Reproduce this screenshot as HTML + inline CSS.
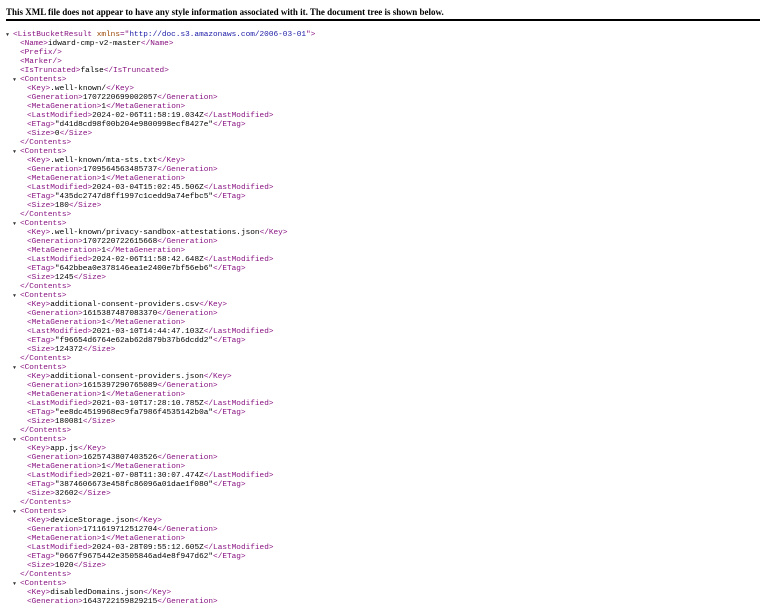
<!DOCTYPE html>
<html><head><meta charset="utf-8"><style>
body{margin:0;background:#fff;width:760px;height:600px;overflow:hidden;position:relative}
.hd{position:absolute;left:6px;top:7px;font:bold 9px "Liberation Serif",serif;color:#000;white-space:nowrap}
.rule{position:absolute;left:6px;right:0;top:19px;height:2px;background:#000}
.x{position:absolute;left:0;top:31px;font:7.75px/9px "Liberation Mono",monospace;color:#000}
.l{height:9px;position:relative;white-space:pre}
.t{color:#881280}.a{color:#994500}.v{color:#1a1aa6}
.ar{position:absolute;font-size:5px;color:#333;top:0}
</style></head><body>
<div class="hd">This XML file does not appear to have any style information associated with it. The document tree is shown below.</div>
<div class="rule"></div>
<div class="x"><div class="l" style="padding-left:13px"><span class="ar" style="left:6px">▼</span><span class="t">&lt;ListBucketResult</span> <span class="a">xmlns</span><span class="t">="</span><span class="v">http://doc.s3.amazonaws.com/2006-03-01</span><span class="t">"&gt;</span></div><div class="l" style="padding-left:20px"><span class="t">&lt;Name&gt;</span>idward-cmp-v2-master<span class="t">&lt;/Name&gt;</span></div><div class="l" style="padding-left:20px"><span class="t">&lt;Prefix/&gt;</span></div><div class="l" style="padding-left:20px"><span class="t">&lt;Marker/&gt;</span></div><div class="l" style="padding-left:20px"><span class="t">&lt;IsTruncated&gt;</span>false<span class="t">&lt;/IsTruncated&gt;</span></div><div class="l" style="padding-left:20px"><span class="ar" style="left:13px">▼</span><span class="t">&lt;Contents&gt;</span></div><div class="l" style="padding-left:27px"><span class="t">&lt;Key&gt;</span>.well-known/<span class="t">&lt;/Key&gt;</span></div><div class="l" style="padding-left:27px"><span class="t">&lt;Generation&gt;</span>1707220699002057<span class="t">&lt;/Generation&gt;</span></div><div class="l" style="padding-left:27px"><span class="t">&lt;MetaGeneration&gt;</span>1<span class="t">&lt;/MetaGeneration&gt;</span></div><div class="l" style="padding-left:27px"><span class="t">&lt;LastModified&gt;</span>2024-02-06T11:58:19.034Z<span class="t">&lt;/LastModified&gt;</span></div><div class="l" style="padding-left:27px"><span class="t">&lt;ETag&gt;</span>"d41d8cd98f00b204e9800998ecf8427e"<span class="t">&lt;/ETag&gt;</span></div><div class="l" style="padding-left:27px"><span class="t">&lt;Size&gt;</span>0<span class="t">&lt;/Size&gt;</span></div><div class="l" style="padding-left:20px"><span class="t">&lt;/Contents&gt;</span></div><div class="l" style="padding-left:20px"><span class="ar" style="left:13px">▼</span><span class="t">&lt;Contents&gt;</span></div><div class="l" style="padding-left:27px"><span class="t">&lt;Key&gt;</span>.well-known/mta-sts.txt<span class="t">&lt;/Key&gt;</span></div><div class="l" style="padding-left:27px"><span class="t">&lt;Generation&gt;</span>1709564563485737<span class="t">&lt;/Generation&gt;</span></div><div class="l" style="padding-left:27px"><span class="t">&lt;MetaGeneration&gt;</span>1<span class="t">&lt;/MetaGeneration&gt;</span></div><div class="l" style="padding-left:27px"><span class="t">&lt;LastModified&gt;</span>2024-03-04T15:02:45.506Z<span class="t">&lt;/LastModified&gt;</span></div><div class="l" style="padding-left:27px"><span class="t">&lt;ETag&gt;</span>"435dc2747d8ff1997c1cedd9a74efbc5"<span class="t">&lt;/ETag&gt;</span></div><div class="l" style="padding-left:27px"><span class="t">&lt;Size&gt;</span>180<span class="t">&lt;/Size&gt;</span></div><div class="l" style="padding-left:20px"><span class="t">&lt;/Contents&gt;</span></div><div class="l" style="padding-left:20px"><span class="ar" style="left:13px">▼</span><span class="t">&lt;Contents&gt;</span></div><div class="l" style="padding-left:27px"><span class="t">&lt;Key&gt;</span>.well-known/privacy-sandbox-attestations.json<span class="t">&lt;/Key&gt;</span></div><div class="l" style="padding-left:27px"><span class="t">&lt;Generation&gt;</span>1707220722615668<span class="t">&lt;/Generation&gt;</span></div><div class="l" style="padding-left:27px"><span class="t">&lt;MetaGeneration&gt;</span>1<span class="t">&lt;/MetaGeneration&gt;</span></div><div class="l" style="padding-left:27px"><span class="t">&lt;LastModified&gt;</span>2024-02-06T11:58:42.648Z<span class="t">&lt;/LastModified&gt;</span></div><div class="l" style="padding-left:27px"><span class="t">&lt;ETag&gt;</span>"642bbea0e378146ea1e2400e7bf56eb6"<span class="t">&lt;/ETag&gt;</span></div><div class="l" style="padding-left:27px"><span class="t">&lt;Size&gt;</span>1245<span class="t">&lt;/Size&gt;</span></div><div class="l" style="padding-left:20px"><span class="t">&lt;/Contents&gt;</span></div><div class="l" style="padding-left:20px"><span class="ar" style="left:13px">▼</span><span class="t">&lt;Contents&gt;</span></div><div class="l" style="padding-left:27px"><span class="t">&lt;Key&gt;</span>additional-consent-providers.csv<span class="t">&lt;/Key&gt;</span></div><div class="l" style="padding-left:27px"><span class="t">&lt;Generation&gt;</span>1615387487083370<span class="t">&lt;/Generation&gt;</span></div><div class="l" style="padding-left:27px"><span class="t">&lt;MetaGeneration&gt;</span>1<span class="t">&lt;/MetaGeneration&gt;</span></div><div class="l" style="padding-left:27px"><span class="t">&lt;LastModified&gt;</span>2021-03-10T14:44:47.103Z<span class="t">&lt;/LastModified&gt;</span></div><div class="l" style="padding-left:27px"><span class="t">&lt;ETag&gt;</span>"f96654d6764e62ab62d879b37b6dcdd2"<span class="t">&lt;/ETag&gt;</span></div><div class="l" style="padding-left:27px"><span class="t">&lt;Size&gt;</span>124372<span class="t">&lt;/Size&gt;</span></div><div class="l" style="padding-left:20px"><span class="t">&lt;/Contents&gt;</span></div><div class="l" style="padding-left:20px"><span class="ar" style="left:13px">▼</span><span class="t">&lt;Contents&gt;</span></div><div class="l" style="padding-left:27px"><span class="t">&lt;Key&gt;</span>additional-consent-providers.json<span class="t">&lt;/Key&gt;</span></div><div class="l" style="padding-left:27px"><span class="t">&lt;Generation&gt;</span>1615397290765089<span class="t">&lt;/Generation&gt;</span></div><div class="l" style="padding-left:27px"><span class="t">&lt;MetaGeneration&gt;</span>1<span class="t">&lt;/MetaGeneration&gt;</span></div><div class="l" style="padding-left:27px"><span class="t">&lt;LastModified&gt;</span>2021-03-10T17:28:10.785Z<span class="t">&lt;/LastModified&gt;</span></div><div class="l" style="padding-left:27px"><span class="t">&lt;ETag&gt;</span>"ee8dc4519968ec9fa7986f4535142b0a"<span class="t">&lt;/ETag&gt;</span></div><div class="l" style="padding-left:27px"><span class="t">&lt;Size&gt;</span>180081<span class="t">&lt;/Size&gt;</span></div><div class="l" style="padding-left:20px"><span class="t">&lt;/Contents&gt;</span></div><div class="l" style="padding-left:20px"><span class="ar" style="left:13px">▼</span><span class="t">&lt;Contents&gt;</span></div><div class="l" style="padding-left:27px"><span class="t">&lt;Key&gt;</span>app.js<span class="t">&lt;/Key&gt;</span></div><div class="l" style="padding-left:27px"><span class="t">&lt;Generation&gt;</span>1625743807403526<span class="t">&lt;/Generation&gt;</span></div><div class="l" style="padding-left:27px"><span class="t">&lt;MetaGeneration&gt;</span>1<span class="t">&lt;/MetaGeneration&gt;</span></div><div class="l" style="padding-left:27px"><span class="t">&lt;LastModified&gt;</span>2021-07-08T11:30:07.474Z<span class="t">&lt;/LastModified&gt;</span></div><div class="l" style="padding-left:27px"><span class="t">&lt;ETag&gt;</span>"3874606673e458fc86096a01dae1f080"<span class="t">&lt;/ETag&gt;</span></div><div class="l" style="padding-left:27px"><span class="t">&lt;Size&gt;</span>32602<span class="t">&lt;/Size&gt;</span></div><div class="l" style="padding-left:20px"><span class="t">&lt;/Contents&gt;</span></div><div class="l" style="padding-left:20px"><span class="ar" style="left:13px">▼</span><span class="t">&lt;Contents&gt;</span></div><div class="l" style="padding-left:27px"><span class="t">&lt;Key&gt;</span>deviceStorage.json<span class="t">&lt;/Key&gt;</span></div><div class="l" style="padding-left:27px"><span class="t">&lt;Generation&gt;</span>1711619712512704<span class="t">&lt;/Generation&gt;</span></div><div class="l" style="padding-left:27px"><span class="t">&lt;MetaGeneration&gt;</span>1<span class="t">&lt;/MetaGeneration&gt;</span></div><div class="l" style="padding-left:27px"><span class="t">&lt;LastModified&gt;</span>2024-03-28T09:55:12.605Z<span class="t">&lt;/LastModified&gt;</span></div><div class="l" style="padding-left:27px"><span class="t">&lt;ETag&gt;</span>"0667f9675442e3505846ad4e8f947d62"<span class="t">&lt;/ETag&gt;</span></div><div class="l" style="padding-left:27px"><span class="t">&lt;Size&gt;</span>1020<span class="t">&lt;/Size&gt;</span></div><div class="l" style="padding-left:20px"><span class="t">&lt;/Contents&gt;</span></div><div class="l" style="padding-left:20px"><span class="ar" style="left:13px">▼</span><span class="t">&lt;Contents&gt;</span></div><div class="l" style="padding-left:27px"><span class="t">&lt;Key&gt;</span>disabledDomains.json<span class="t">&lt;/Key&gt;</span></div><div class="l" style="padding-left:27px"><span class="t">&lt;Generation&gt;</span>1643722159829215<span class="t">&lt;/Generation&gt;</span></div></div>
</body></html>
